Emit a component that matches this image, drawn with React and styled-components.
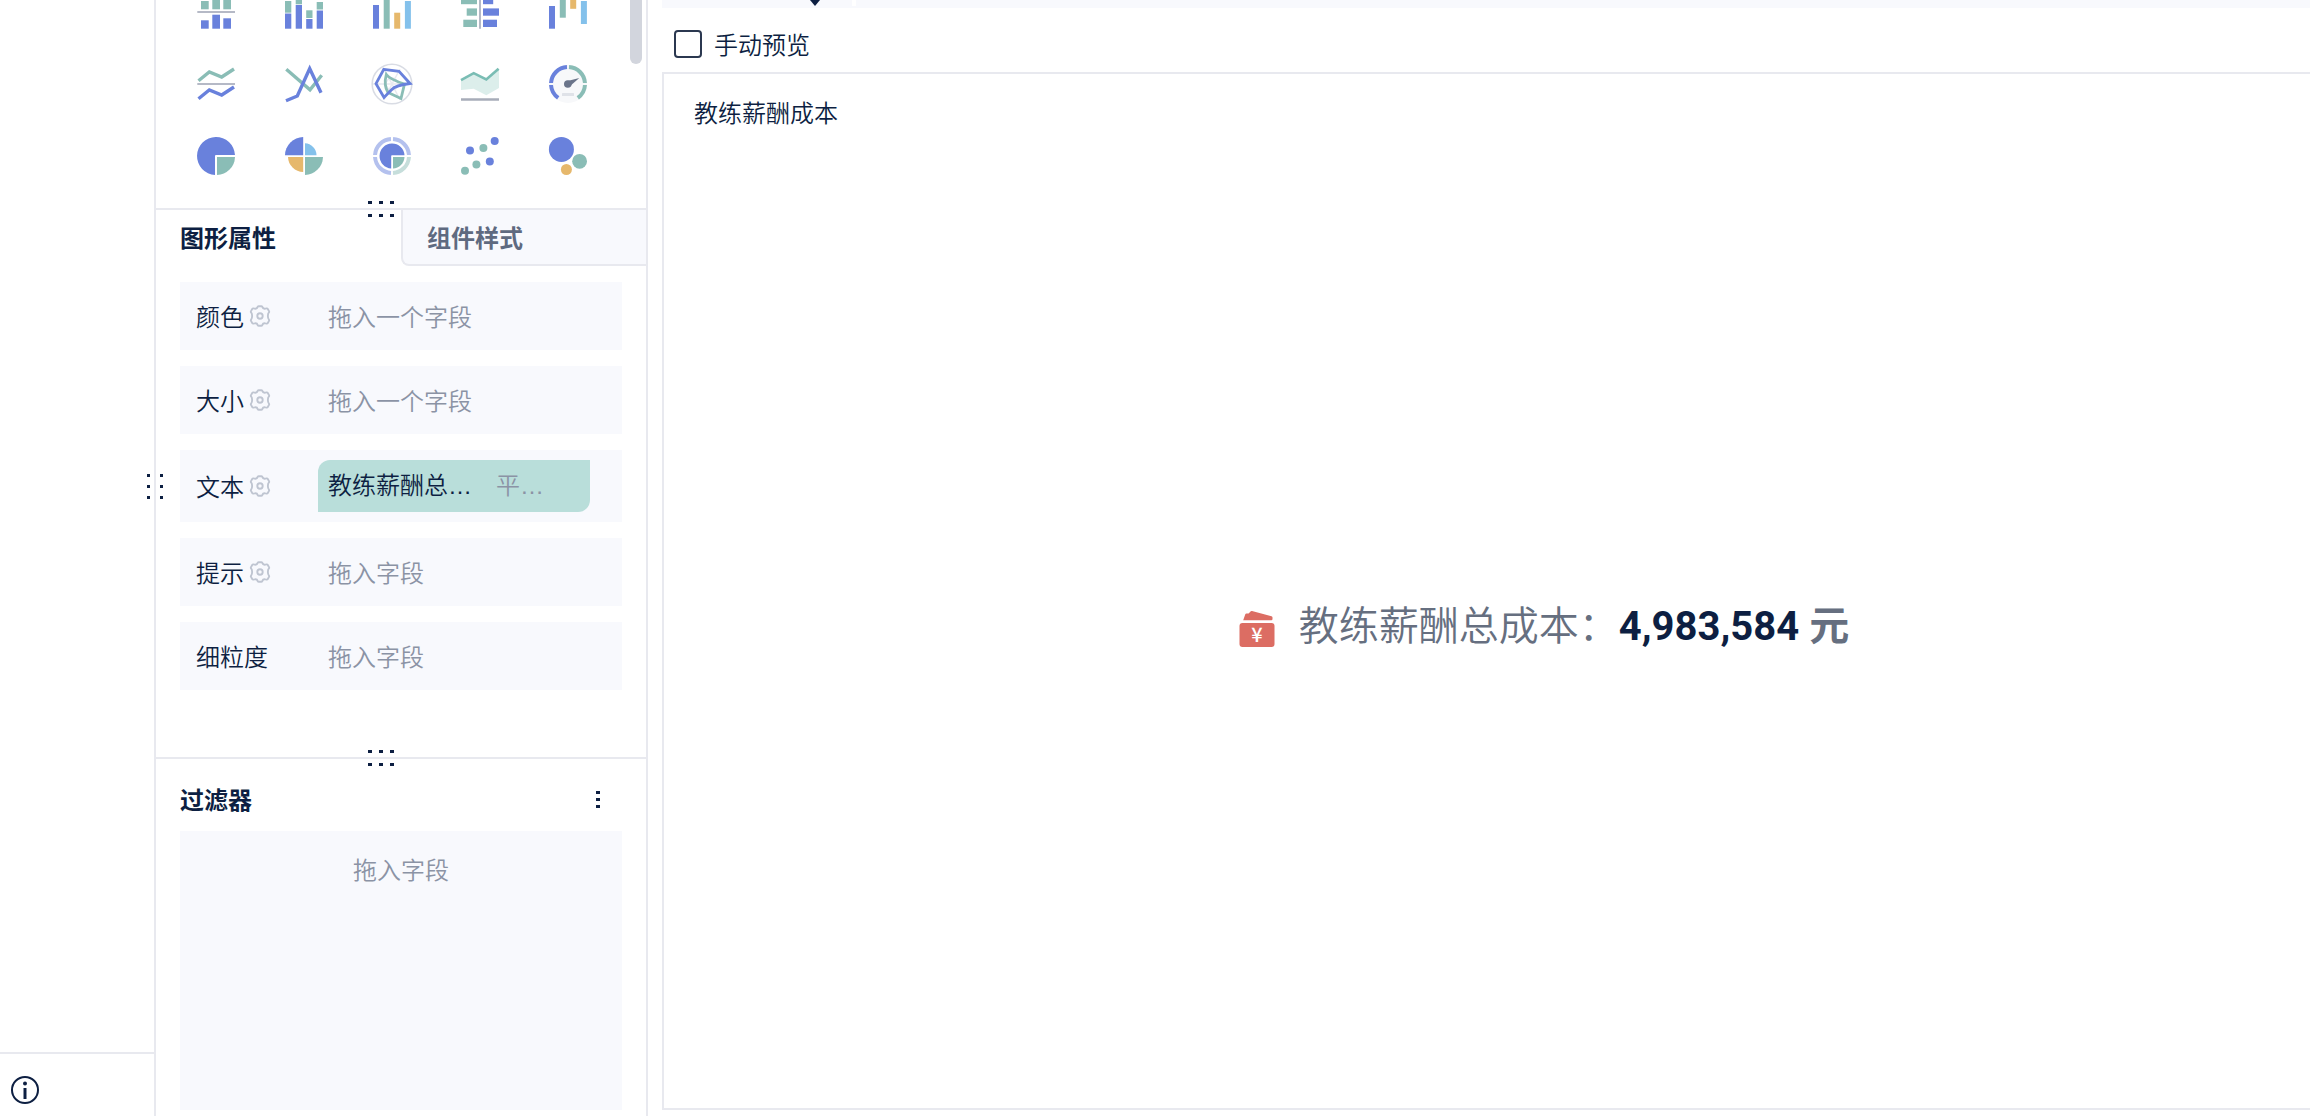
import React, { useState } from 'react';
import styled, { createGlobalStyle, css } from 'styled-components';

const ink = '#0d1f42';
const line = '#e8e9ef';
const panel = '#f8f9fd';
const muted = '#8b93a5';
const blue = '#6981dc';
const green = '#8abdb6';
const orange = '#e6b86c';
const sky = '#84c1eb';
const axis = '#b5b9c6';

const GlobalStyle = createGlobalStyle`
  *, *::before, *::after { box-sizing: border-box; }
  body {
    margin: 0;
    background: #fff;
    color: ${ink};
    font-family: "Noto Sans CJK SC", sans-serif;
    font-size: 24px;
    font-weight: 350;
    line-height: 36px;
  }
  button {
    margin: 0;
    padding: 0;
    border: 0;
    background: none;
    color: inherit;
    font: inherit;
    cursor: pointer;
  }
  svg { display: block; overflow: visible; }
`;

const Page = styled.div`
  display: flex;
  height: 100vh;
  overflow: hidden;
`;

const Sidebar = styled.aside`
  position: relative;
  flex: none;
  display: flex;
  flex-direction: column;
  justify-content: flex-end;
  width: 156px;
  border-right: 2px solid ${line};
`;

const SidebarFooter = styled.footer`
  display: flex;
  align-items: center;
  height: 64px;
  padding: 10px 10px 0;
  border-top: 2px solid ${line};
`;

const Config = styled.section`
  flex: none;
  display: flex;
  flex-direction: column;
  width: 492px;
  border-right: 2px solid ${line};
`;

const Pane = styled.div`
  position: relative;
  flex: none;
  display: flex;
  flex-direction: column;
  border-bottom: 2px solid ${line};
`;

const ChartPane = styled(Pane)`
  justify-content: flex-end;
  height: 210px;
  padding: 0 58px 32px 40px;
`;

const ChartGrid = styled.div`
  display: grid;
  grid-template-columns: repeat(5, 40px);
  justify-content: space-between;
  row-gap: 32px;
`;

const ScrollThumb = styled.div`
  position: absolute;
  top: 0;
  right: 4px;
  width: 12px;
  height: 64px;
  border-radius: 0 0 6px 6px;
  background: #d2d5dd;
`;

const Handle = styled.div`
  position: absolute;
  z-index: 1;
  display: grid;
  ${(p) =>
    p.$vertical
      ? css`
          top: 474px;
          right: -9px;
          grid-template-columns: repeat(2, 3px);
          gap: 8px 10px;
        `
      : css`
          bottom: -9px;
          left: 212px;
          grid-template-columns: repeat(3, 4px);
          gap: 10px 7px;
        `}
`;

const Dot = styled.i`
  width: ${(p) => (p.$wide ? 4 : 3)}px;
  height: 3px;
  background: ${ink};
`;

const PropsPane = styled(Pane)`
  height: 549px;
`;

const Tabs = styled.div`
  display: grid;
  grid-template-columns: 1fr 1fr;
  height: 56px;
`;

const Tab = styled.button`
  padding: 0 24px;
  border-bottom: 2px solid transparent;
  text-align: left;
  font-weight: 700;
  ${(p) =>
    !p.$active &&
    css`
      border-left: 2px solid ${line};
      border-bottom-color: ${line};
      border-bottom-left-radius: 8px;
      background: ${panel};
      color: #5f6a80;
    `}
`;

const FieldList = styled.div`
  display: flex;
  flex-direction: column;
  gap: 16px;
  padding: 16px 24px;
`;

const FieldRow = styled.div`
  display: flex;
  align-items: center;
  min-height: 68px;
  padding: 10px 32px 10px 16px;
  background: ${panel};
`;

const FieldLabel = styled.div`
  flex: none;
  display: flex;
  align-items: center;
  gap: 5px;
  width: 122px;
`;

const Placeholder = styled.span`
  padding-left: 10px;
  color: ${muted};
`;

const Chip = styled.button`
  flex: 1;
  display: flex;
  align-items: center;
  gap: 24px;
  height: 52px;
  padding: 0 10px;
  border-radius: 12px 0;
  background: #b9deda;
  font-family: "Liberation Sans", "Noto Sans CJK SC", sans-serif;
`;

const ChipNote = styled.span`
  color: ${muted};
`;

const FilterPane = styled.div`
  flex: 1;
  display: flex;
  flex-direction: column;
  padding: 8px 24px 6px;
`;

const FilterHeader = styled.header`
  display: flex;
  align-items: center;
  justify-content: space-between;
  height: 64px;
  padding-right: 14px;
`;

const FilterTitle = styled.h2`
  margin: 0;
  font-size: 24px;
  font-weight: 700;
`;

const MenuButton = styled.button`
  display: grid;
  justify-items: center;
  gap: 4px;
  width: 20px;
`;

const DropZone = styled.div`
  flex: 1;
  padding: 20px;
  background: ${panel};
  color: ${muted};
  text-align: center;
`;

const Main = styled.main`
  flex: 1;
  min-width: 0;
  display: flex;
  flex-direction: column;
  padding: 0 0 6px 14px;
  overflow: hidden;
`;

const Shelf = styled.div`
  flex: none;
  display: flex;
  height: 8px;
  background: ${panel};
`;

const ShelfLabel = styled.div`
  display: flex;
  width: 194px;
  height: 6px;
  padding-left: 148px;
  border-right: 4px solid #fff;
`;

const Caret = styled.i`
  width: 0;
  height: 0;
  border: 5px solid transparent;
  border-width: 6px 5px 0;
  border-top-color: ${ink};
`;

const PreviewToggle = styled.label`
  display: flex;
  align-items: center;
  gap: 12px;
  height: 64px;
  padding: 8px 12px 0;
  cursor: pointer;
`;

const CheckBox = styled.input`
  appearance: none;
  width: 28px;
  height: 28px;
  margin: 0;
  border: 2px solid #2b3850;
  border-radius: 4px;
  &:checked { background: ${blue}; }
`;

const Card = styled.article`
  flex: 1;
  display: flex;
  flex-direction: column;
  margin-right: -116px;
  border: 2px solid ${line};
`;

const CardTitle = styled.h1`
  margin: 0;
  padding: 20px 30px 12px;
  font-size: 24px;
  font-weight: 350;
`;

const CardBody = styled.div`
  flex: 1;
  display: flex;
  align-items: center;
  justify-content: center;
  gap: 24px;
  font-size: 40px;
  line-height: 60px;
  color: #666f80;
`;

const WalletMark = styled.div`
  padding-top: 8px;
`;

const Kpi = styled.p`
  margin: 0;
`;

const KpiValue = styled.strong`
  color: ${ink};
  font-family: Roboto, "Liberation Sans", sans-serif;
  font-weight: 700;
`;

const KpiUnit = styled.span`
  padding-left: 10px;
  font-weight: 700;
`;

const GearIcon = () => (
  <svg width="22" height="22" viewBox="0 0 22 22" fill="none" stroke="#bfc5d1" strokeWidth="1.9" strokeLinejoin="round">
    <path d="M8.7 1.9Q9 1.2 9.8 1.2H12.2Q13 1.2 13.3 1.9C13.8 3.4 14.8 4 16.4 3.6L17.6 3.4Q18.4 3.3 18.8 4L20 6.1Q20.4 6.8 19.9 7.4C18.8 8.6 18.9 9.6 18.9 11S18.8 13.4 19.9 14.6Q20.4 15.2 20 15.9L18.8 18Q18.4 18.7 17.6 18.6L16.4 18.4C14.8 18 13.8 18.6 13.3 20.1Q13 20.8 12.2 20.8H9.8Q9 20.8 8.7 20.1C8.2 18.6 7.2 18 5.6 18.4L4.4 18.6Q3.6 18.7 3.2 18L2 15.9Q1.6 15.2 2.1 14.6C3.2 13.4 3.1 12.4 3.1 11S3.2 8.6 2.1 7.4Q1.6 6.8 2 6.1L3.2 4Q3.6 3.3 4.4 3.4L5.6 3.6C7.2 4 8.2 3.4 8.7 1.9Z" />
    <circle cx="11" cy="11" r="2.7" />
  </svg>
);

const InfoIcon = () => (
  <svg width="30" height="30" viewBox="0 0 30 30" fill="none" stroke={ink} strokeWidth="2">
    <circle cx="15" cy="15" r="13" />
    <path d="M15 13V24" strokeWidth="3" />
    <circle cx="15" cy="8.5" r="2" fill={ink} stroke="none" />
  </svg>
);

const WalletIcon = () => (
  <svg width="36" height="36" viewBox="0 0 36 36" fill="#dc6d63">
    <path d="M4.2 9.2L6.300 3.300Q6.600 2.500 7.400 2.500H9.600L11.500 .4Q12.200 -.2 13 .1L32.500 5.200Q33.500 5.500 33.500 6.500V8Q33.500 9.200 32.300 9.200Z" />
    <rect x="0.500" y="12" width="35" height="24" rx="3" />
    <text x="18" y="31" fill="#fff" fontFamily="Noto Sans CJK SC, sans-serif" fontSize="20" fontWeight="500" textAnchor="middle">¥</text>
  </svg>
);

const bars = (list) =>
  list.map(([x, y, w, h, fill]) => <rect key={`${x}-${y}`} x={x} y={y} width={w} height={h} fill={fill} />);

const chartTypes = [
  ['对比柱状图', <>
    {bars([
      [5, 9, 7.7, 8.3, green], [16.3, 5, 7.7, 12.3, green], [27.3, 3, 7.7, 14.3, green],
      [5, 28.3, 7.7, 8.4, blue], [16.3, 22.7, 7.7, 14, blue], [27.3, 26.3, 7.7, 10.4, blue],
    ])}
    <path d="M1.3 20H39" stroke={axis} strokeWidth="2" />
  </>],
  ['堆积柱状图', bars([
    [1, 9, 6.3, 11.7, green], [11.7, 3, 6.3, 9.3, green], [22.2, 18.3, 6.3, 7.7, green], [32.7, 10, 6.3, 7.5, green],
    [1, 21.5, 6.3, 15.2, blue], [11.7, 13, 6.3, 23.7, blue], [22.2, 27, 6.3, 9.7, blue], [32.7, 18.5, 6.3, 18.2, blue],
  ])],
  ['分区柱状图', bars([
    [1, 13, 6, 23.7, blue], [11.7, 3, 6, 33.7, green], [22.2, 20.7, 6, 16, orange], [32.9, 9, 6, 27.7, sky],
  ])],
  ['对比条形图', <>
    {bars([
      [1, 5, 16, 7.2, green], [6.7, 16.4, 10.3, 7.3, green], [3.3, 27.7, 13.7, 7.3, green],
      [23, 5, 10.2, 7.2, blue], [23, 16.4, 16, 7.3, blue], [23, 27.7, 14, 7.3, blue],
    ])}
    <path d="M20 3V36.7" stroke={axis} strokeWidth="2" />
  </>],
  ['瀑布图', bars([
    [1, 14, 6, 22.7, blue], [11.8, 5, 6, 20.7, green], [22.2, 3, 6, 13.8, orange], [32.9, 9, 6, 23, sky],
  ])],
  ['对比折线图', <g fill="none" strokeWidth="3.4">
    <path d="M2.5 16.8L13.3 8L25.7 13L38 5" stroke={green} />
    <path d="M1.3 20H39" stroke={axis} strokeWidth="2" />
    <path d="M2.5 34.8L13.3 26L25.7 31L38 23" stroke={blue} />
  </g>],
  ['折线图', <g fill="none" strokeWidth="3.4">
    <path d="M2.3 5.3L26 25.7L37.7 11.3" stroke={green} />
    <path d="M2 36.7L13.3 32L25.7 4.5L37 28.7" stroke={blue} />
  </g>],
  ['雷达图', <g fill="none">
    <path d="M20 20L12 5M20 20L28 5M20 20H39M20 20L28 36M20 20L12 36M20 20H1" stroke="#e8eaf0" strokeWidth="1.5" />
    <circle cx="20" cy="20" r="6" stroke="#e8eaf0" strokeWidth="1.5" />
    <circle cx="20" cy="20" r="19.8" stroke="#d9dce4" strokeWidth="1.6" />
    <path d="M14.3 10.5Q18 15.5 32.5 20L29 34.5L16 28.5Q11.5 21 14.3 10.5Z" stroke={green} strokeWidth="2.800" />
    <path d="M11.8 5.3L27 7.4L38 19.5Q24 21 19.5 25.7L12 33.5L4 19.7Z" stroke={blue} strokeWidth="2.800" />
  </g>],
  ['面积图', <>
    <path d="M1 16L13.7 9L26.3 15.7L39 4.7V24L26.3 31.3L13.7 24.7L1 26Z" fill="#dceeeb" />
    <path d="M1 16.2L13.7 9.2L26.3 15.5L38.6 4.7" fill="none" stroke="#7abdb4" strokeWidth="2.600" />
    <path d="M1 35.5H39" stroke="#a7acb9" strokeWidth="2.400" />
  </>],
  ['仪表盘', <g fill="none" strokeWidth="4">
    <circle cx="20" cy="20" r="19" fill="#f7f8fa" />
    <path d="M19 3.03A17 17 0 0 0 3.03 19M3.03 21A17 17 0 0 0 10.2 33.9" stroke={blue} />
    <path d="M21 3.03A17 17 0 0 1 36.97 19M36.97 21A17 17 0 0 1 29.8 33.9" stroke={green} />
    <circle cx="19.8" cy="20" r="3.8" fill="#6a748a" />
    <path d="M18.5 17.2L31.3 14L21.5 22.5Z" fill="#6a748a" />
    <rect x="14" y="29" width="12" height="3" rx="0.5" fill="#dfe2e8" />
  </g>],
  ['饼图', <>
    <path d="M19 20V39A19 19 0 1 1 39 19H20Q19 19 19 20Z" fill={blue} />
    <path d="M21 21H39A18.5 18.5 0 0 1 21 39Z" fill={green} />
  </>],
  ['玫瑰图', <>
    <path d="M19.2 19.2H1A18.5 18.5 0 0 1 19.2 1Z" fill={blue} />
    <path d="M21 19.2V7.3A12 12 0 0 1 32.5 19.2Z" fill={sky} />
    <path d="M19.2 21V36A15.5 15.5 0 0 1 4 21Z" fill={orange} />
    <path d="M21 21H39A18.5 18.5 0 0 1 21 39Z" fill={green} />
  </>],
  ['多层饼图', <>
    <g fill="none" strokeWidth="4" stroke="#b4c1ee">
      <path d="M21 3.03A17 17 0 0 1 36.97 19M19 3.03A17 17 0 0 0 3.03 19M3.03 21A17 17 0 0 0 19 36.97" />
      <path d="M36.97 21A17 17 0 0 1 21 36.97" stroke="#c6dedb" />
    </g>
    <path d="M19.2 20V32.5A12.5 12.5 0 1 1 32.5 19.2H20Q19.2 19.2 19.2 20Z" fill={blue} />
    <path d="M21 21H32.5A12 12 0 0 1 21 32.5Z" fill={green} />
  </>],
  ['散点图', <>
    <g fill={blue}><circle cx="34.7" cy="5" r="4" /><circle cx="10" cy="14.4" r="4" /><circle cx="29.8" cy="25.4" r="4" /></g>
    <g fill={green}><circle cx="23.4" cy="12" r="4" /><circle cx="16.4" cy="28.4" r="4" /><circle cx="5" cy="34.8" r="4" /></g>
  </>],
  ['气泡图', <>
    <circle cx="13.4" cy="13.4" r="12.5" fill={blue} />
    <circle cx="31.6" cy="25.3" r="7.4" fill={green} />
    <circle cx="18.4" cy="33.5" r="5.5" fill={orange} />
  </>],
];

const fields = [
  { label: '颜色', gear: true, hint: '拖入一个字段' },
  { label: '大小', gear: true, hint: '拖入一个字段' },
  { label: '文本', gear: true, chip: ['教练薪酬总…', '平…'] },
  { label: '提示', gear: true, hint: '拖入字段' },
  { label: '细粒度', hint: '拖入字段' },
];

const DragHandle = ({ vertical }) => (
  <Handle $vertical={vertical}>
    {[0, 1, 2, 3, 4, 5].map((n) => <Dot key={n} $wide={!vertical} />)}
  </Handle>
);

export default function App() {
  const [manual, setManual] = useState(false);
  return (
    <>
      <GlobalStyle />
      <Page>
        <Sidebar>
          <DragHandle vertical />
          <SidebarFooter>
            <button type="button" aria-label="信息"><InfoIcon /></button>
          </SidebarFooter>
        </Sidebar>

        <Config>
          <ChartPane>
            <ChartGrid>
              {chartTypes.map(([name, drawing]) => (
                <button type="button" key={name} aria-label={name}>
                  <svg width="40" height="40" viewBox="0 0 40 40">{drawing}</svg>
                </button>
              ))}
            </ChartGrid>
            <ScrollThumb />
            <DragHandle />
          </ChartPane>

          <PropsPane>
            <Tabs role="tablist">
              <Tab type="button" role="tab" aria-selected="true" $active>图形属性</Tab>
              <Tab type="button" role="tab" aria-selected="false">组件样式</Tab>
            </Tabs>
            <FieldList>
              {fields.map(({ label, gear, hint, chip }) => (
                <FieldRow key={label}>
                  <FieldLabel>
                    {label}
                    {gear && <button type="button" aria-label={`${label}设置`}><GearIcon /></button>}
                  </FieldLabel>
                  {chip ? (
                    <Chip type="button">
                      <span>{chip[0]}</span>
                      <ChipNote>{chip[1]}</ChipNote>
                    </Chip>
                  ) : (
                    <Placeholder>{hint}</Placeholder>
                  )}
                </FieldRow>
              ))}
            </FieldList>
            <DragHandle />
          </PropsPane>

          <FilterPane>
            <FilterHeader>
              <FilterTitle>过滤器</FilterTitle>
              <MenuButton type="button" aria-label="更多"><Dot $wide /><Dot $wide /><Dot $wide /></MenuButton>
            </FilterHeader>
            <DropZone>拖入字段</DropZone>
          </FilterPane>
        </Config>

        <Main>
          <Shelf>
            <ShelfLabel><Caret /></ShelfLabel>
          </Shelf>
          <PreviewToggle>
            <CheckBox type="checkbox" checked={manual} onChange={(e) => setManual(e.target.checked)} />
            <span>手动预览</span>
          </PreviewToggle>
          <Card>
            <CardTitle>教练薪酬成本</CardTitle>
            <CardBody>
              <WalletMark><WalletIcon /></WalletMark>
              <Kpi>
                教练薪酬总成本：<KpiValue>4,983,584</KpiValue><KpiUnit>元</KpiUnit>
              </Kpi>
            </CardBody>
          </Card>
        </Main>
      </Page>
    </>
  );
}
